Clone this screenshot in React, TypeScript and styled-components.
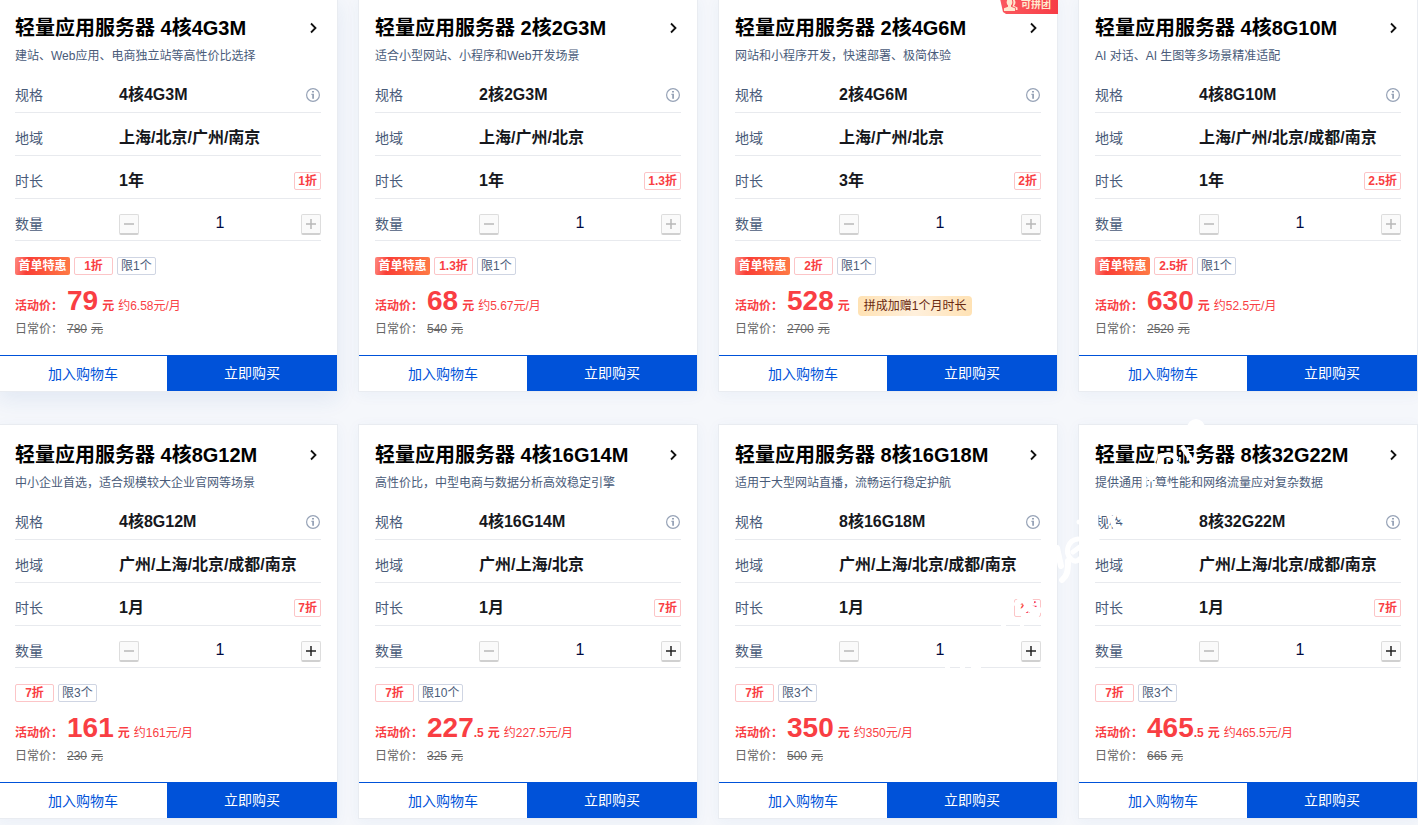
import React, { useState } from 'react';
import styled, { createGlobalStyle, css } from 'styled-components';

const GlobalStyle = createGlobalStyle`
  * { box-sizing: border-box; }
  body {
    margin: 0;
    background: #f5f7fb;
    font-family: "Liberation Sans", "Noto Sans CJK SC", sans-serif;
    font-size: 12px;
    color: #000;
  }
  button, input { font-family: inherit; }
`;

const Page = styled.main`
  position: relative;
  overflow: hidden;
  min-height: 100vh;
`;

const Grid = styled.div`
  display: grid;
  grid-template-columns: repeat(4, minmax(0, 1fr));
  gap: 32px 20px;
  margin: -3px 0 0 -2px;
`;

const Card = styled.article<{ $active?: boolean }>`
  position: relative;
  display: flex;
  flex-direction: column;
  background: #fff;
  border: 1px solid #e9ecf1;
  box-shadow: ${(p) =>
    p.$active ? '0 8px 20px rgba(36, 91, 163, 0.09)' : '0 3px 14px rgba(36, 104, 182, 0.05)'};
`;

const CardBody = styled.div`
  display: flex;
  flex-direction: column;
  padding: 16px 16px 0;
`;

const TitleLink = styled.a`
  display: flex;
  align-items: center;
  justify-content: space-between;
  height: 28px;
  color: #000;
  text-decoration: none;
`;

const Title = styled.h3`
  margin: 0;
  font-size: 20px;
  line-height: 28px;
  font-weight: 700;
  white-space: nowrap;
`;

const Description = styled.p`
  margin: 4px 0;
  font-size: 12px;
  line-height: 20px;
  color: #495b79;
  white-space: nowrap;
`;

const Row = styled.div<{ $short?: boolean }>`
  display: flex;
  align-items: center;
  height: ${(p) => (p.$short ? 42 : 43)}px;
  padding-top: 8px;
  border-bottom: 1px solid #e8eaee;
`;

const RowLabel = styled.span`
  flex: 0 0 104px;
  font-size: 14px;
  line-height: 20px;
  color: #495b79;
`;

const RowValue = styled.span`
  flex: 1;
  font-size: 16px;
  line-height: 22px;
  font-weight: 700;
  color: #16181d;
  white-space: nowrap;
`;

const InfoButton = styled.button`
  display: flex;
  padding: 0;
  margin-right: 1px;
  border: 0;
  background: none;
`;

const Tag = styled.span<{ $kind: 'rate' | 'limit' | 'first' }>`
  height: 18px;
  padding: 0 3px;
  border: 1px solid #fcc5c7;
  border-radius: 2px;
  font-size: 12px;
  line-height: 16px;
  text-align: center;
  white-space: nowrap;
  ${(p) =>
    p.$kind === 'rate' &&
    css`
      color: #f93e43;
      font-weight: 700;
    `}
  ${(p) =>
    p.$kind === 'limit' &&
    css`
      border-color: #cfd5e3;
      color: #495b79;
    `}
  ${(p) =>
    p.$kind === 'first' &&
    css`
      min-width: 55px;
      border: 0;
      line-height: 18px;
      color: #fff;
      font-weight: 700;
      background: linear-gradient(100deg, #ff8a80 0, #fa3f36 24%, #ff7a45 100%);
    `}
`;

const TagList = styled.div`
  display: flex;
  gap: 4px;
  margin-top: 16px;
`;

const RateTag = styled(Tag)`
  min-width: 39px;
`;

const Stepper = styled.div`
  display: flex;
  flex: 1;
  min-width: 0;
  align-items: center;
  padding-top: 1px;
`;

const StepButton = styled.button`
  display: flex;
  flex: 0 0 20px;
  align-items: center;
  justify-content: center;
  height: 21px;
  padding: 0;
  border: 1px solid #ddd;
  border-bottom: 2px solid #d0d0d0;
  border-radius: 2px;
  background: #fafafa;
  color: #222;
  &:disabled { color: #b8b8b8; }
`;

const QuantityInput = styled.input`
  flex: 1;
  min-width: 0;
  width: 100%;
  height: 22px;
  padding: 0 0 2px;
  border: 0;
  outline: 0;
  background: none;
  font-size: 16px;
  text-align: center;
  color: #000a41;
`;

const PriceRow = styled.div`
  display: flex;
  align-items: baseline;
  height: 32px;
  margin-top: 10px;
  line-height: 32px;
  color: #f93e43;
  font-weight: 700;
  white-space: nowrap;
`;

const PriceLabel = styled.span`
  flex: 0 0 52px;
`;

const Amount = styled.span`
  font-size: 28px;
`;

const Unit = styled.span`
  margin-left: 4px;
`;

const Monthly = styled.span`
  margin-left: 4px;
  font-weight: 400;
`;

const Gift = styled.span`
  height: 20px;
  margin-left: 8px;
  padding: 0 6px;
  border-radius: 4px;
  background: linear-gradient(90deg, #ffe2b4, #fff0dc 50%, #ffe2b4);
  line-height: 20px;
  font-weight: 400;
  color: #6a2a10;
`;

const DailyRow = styled.div`
  display: flex;
  height: 20px;
  margin: 2px 0 16px;
  line-height: 20px;
  color: #666;
`;

const OldPrice = styled.s`
  margin-right: 4px;
`;

const Footer = styled.footer`
  display: flex;
  height: 36px;
`;

const CartButton = styled.button`
  flex: 168 1 0;
  padding: 0 0 2px;
  border: 0;
  border-top: 1px solid #0052d9;
  background: #fff;
  font-size: 14px;
  color: #0052d9;
`;

const BuyButton = styled.button`
  flex: 170 1 0;
  padding: 0 0 2px;
  border: 0;
  background: #0052d9;
  font-size: 14px;
  color: #fff;
`;

const GroupBadge = styled.span`
  position: absolute;
  top: -4px;
  right: -1px;
  display: flex;
  align-items: center;
  justify-content: flex-end;
  gap: 3px;
  width: 59px;
  height: 20px;
  padding: 2px 7px 0 0;
  background: linear-gradient(90deg, #fb5a5f, #f73c46);
  clip-path: polygon(0 0, 100% 0, 100% 100%, 7px 100%, 4px 90%);
  font-size: 10px;
  line-height: 18px;
  font-weight: 700;
  color: #ffe9cf;
`;

const Watermark = styled.svg`
  position: absolute;
  top: 418px;
  right: 178px;
  pointer-events: none;
`;

interface Server {
  spec: string;
  desc: string;
  regions: string;
  term: string;
  rate: string;
  limit: number;
  price: string;
  cents?: string;
  monthly?: string;
  gift?: string;
  daily: string;
  first?: boolean;
}

const servers: Server[] = [
  { spec: '4核4G3M', desc: '建站、Web应用、电商独立站等高性价比选择', regions: '上海/北京/广州/南京', term: '1年', rate: '1折', limit: 1, price: '79', monthly: '约6.58元/月', daily: '780', first: true },
  { spec: '2核2G3M', desc: '适合小型网站、小程序和Web开发场景', regions: '上海/广州/北京', term: '1年', rate: '1.3折', limit: 1, price: '68', monthly: '约5.67元/月', daily: '540', first: true },
  { spec: '2核4G6M', desc: '网站和小程序开发，快速部署、极简体验', regions: '上海/广州/北京', term: '3年', rate: '2折', limit: 1, price: '528', gift: '拼成加赠1个月时长', daily: '2700', first: true },
  { spec: '4核8G10M', desc: 'AI 对话、AI 生图等多场景精准适配', regions: '上海/广州/北京/成都/南京', term: '1年', rate: '2.5折', limit: 1, price: '630', monthly: '约52.5元/月', daily: '2520', first: true },
  { spec: '4核8G12M', desc: '中小企业首选，适合规模较大企业官网等场景', regions: '广州/上海/北京/成都/南京', term: '1月', rate: '7折', limit: 3, price: '161', monthly: '约161元/月', daily: '230' },
  { spec: '4核16G14M', desc: '高性价比，中型电商与数据分析高效稳定引擎', regions: '广州/上海/北京', term: '1月', rate: '7折', limit: 10, price: '227', cents: '.5', monthly: '约227.5元/月', daily: '325' },
  { spec: '8核16G18M', desc: '适用于大型网站直播，流畅运行稳定护航', regions: '广州/上海/北京/成都/南京', term: '1月', rate: '7折', limit: 3, price: '350', monthly: '约350元/月', daily: '500' },
  { spec: '8核32G22M', desc: '提供通用计算性能和网络流量应对复杂数据', regions: '广州/上海/北京/成都/南京', term: '1月', rate: '7折', limit: 3, price: '465', cents: '.5', monthly: '约465.5元/月', daily: '665' },
];

const Chevron = () => (
  <svg width="16" height="16" viewBox="0 0 16 16" fill="none" stroke="#111" strokeWidth="1.800">
    <path d="M6 3.500 10.500 8 6 12.500" />
  </svg>
);

const InfoIcon = () => (
  <svg width="14" height="14" viewBox="0 0 14 14" fill="none">
    <circle cx="7" cy="7" r="6.400" stroke="#97a3b7" strokeWidth="1.200" />
    <path d="M6 3h2v1.600H6zM5.400 5.800H8v5H6.200V7h-.8z" fill="#97a3b7" />
  </svg>
);

const Minus = () => (
  <svg width="10" height="10" viewBox="0 0 10 10" stroke="currentColor" strokeWidth="1.500">
    <path d="M0 5h10" />
  </svg>
);

const Plus = () => (
  <svg width="10" height="10" viewBox="0 0 10 10" stroke="currentColor" strokeWidth="1.500">
    <path d="M0 5h10M5 0v10" />
  </svg>
);

const PeopleIcon = () => (
  <svg width="14" height="14" viewBox="0 0 14 14" fill="currentColor">
    <ellipse cx="5.500" cy="4.200" rx="2.800" ry="3.400" />
    <path d="M4 6.500h3v2.200l4 1.600V13H0v-2.700l4-1.600zM8.600 1.200c3 0 3.800 4 1.600 6.200v.6l3.300 1.600V12h-1.700V9.800L8.400 8.300C9.800 6 9.600 3 8.600 1.200z" />
  </svg>
);

function ServerCard({ server, active }: { server: Server; active?: boolean }) {
  const [count, setCount] = useState(1);
  const id = `qty-${server.spec}`;
  return (
    <Card $active={active}>
      {server.gift && (
        <GroupBadge>
          <PeopleIcon />
          可拼团
        </GroupBadge>
      )}
      <CardBody>
        <TitleLink href="#">
          <Title>轻量应用服务器 {server.spec}</Title>
          <Chevron />
        </TitleLink>
        <Description>{server.desc}</Description>
        <Row>
          <RowLabel>规格</RowLabel>
          <RowValue>{server.spec}</RowValue>
          <InfoButton aria-label="规格说明">
            <InfoIcon />
          </InfoButton>
        </Row>
        <Row>
          <RowLabel>地域</RowLabel>
          <RowValue>{server.regions}</RowValue>
        </Row>
        <Row>
          <RowLabel>时长</RowLabel>
          <RowValue>{server.term}</RowValue>
          <Tag $kind="rate">{server.rate}</Tag>
        </Row>
        <Row $short>
          <RowLabel as="label" htmlFor={id}>数量</RowLabel>
          <Stepper>
            <StepButton aria-label="减少" disabled={count <= 1} onClick={() => setCount(count - 1)}>
              <Minus />
            </StepButton>
            <QuantityInput id={id} value={count} readOnly />
            <StepButton aria-label="增加" disabled={count >= server.limit} onClick={() => setCount(count + 1)}>
              <Plus />
            </StepButton>
          </Stepper>
        </Row>
        <TagList>
          {server.first && <Tag $kind="first">首单特惠</Tag>}
          <RateTag $kind="rate">{server.rate}</RateTag>
          <Tag $kind="limit">限{server.limit}个</Tag>
        </TagList>
        <PriceRow>
          <PriceLabel>活动价：</PriceLabel>
          <Amount>{server.price}</Amount>
          {server.cents && <span>{server.cents}</span>}
          <Unit>元</Unit>
          {server.monthly && <Monthly>{server.monthly}</Monthly>}
          {server.gift && <Gift>{server.gift}</Gift>}
        </PriceRow>
        <DailyRow>
          <PriceLabel>日常价：</PriceLabel>
          <OldPrice>{server.daily}</OldPrice>
          <s>元</s>
        </DailyRow>
      </CardBody>
      <Footer>
        <CartButton>加入购物车</CartButton>
        <BuyButton>立即购买</BuyButton>
      </Footer>
    </Card>
  );
}

export default function App() {
  return (
    <>
      <GlobalStyle />
      <Page>
        <Grid>
          {servers.map((server, index) => (
            <ServerCard key={server.spec} server={server} active={index === 0} />
          ))}
        </Grid>
        <Watermark width="300" height="260" viewBox="940 418 300 260" fill="none" stroke="#fff" strokeWidth="8" strokeLinecap="round" aria-hidden="true">
          <circle cx="1196" cy="428" r="9" fill="#fff" stroke="none" />
          <path d="M1183 448l12 17M1159 463c2-9 10-11 17-5M1176 463l4 3M1160 456v8" strokeWidth="5" />
          <path d="M1144 478v10M1158 488l4 1M1152 478l-1 1M1170 486l-1 4" strokeWidth="5" />
          <path d="M1096 514v14M1108 514l2 4M1113 518c-1 6 1 10 8 10M1119 516l1 1M1094 539h3" strokeWidth="5" />
          <path d="M1057 548l4 18M1062 580c5-4 6-8 6-19" strokeWidth="6" />
          <path d="M1078 539c-10 1-14 13-7 20 4 4 8 2 11-3M1073 552l8-6M1079 522h1" strokeWidth="5" />
          <path d="M1017 604c4-6 12-6 14-2M1018 611c5 3 8-4 12-4M1033 609c1 4 4 4 6 1M1024 616c4 2 8 1 12 0M1025 602l6 8" strokeWidth="6" />
          <path d="M1001 626h5M1020 626h4M945 668h5M960 668h5M971 668h10" strokeWidth="3" strokeLinecap="butt" />
        </Watermark>
      </Page>
    </>
  );
}
